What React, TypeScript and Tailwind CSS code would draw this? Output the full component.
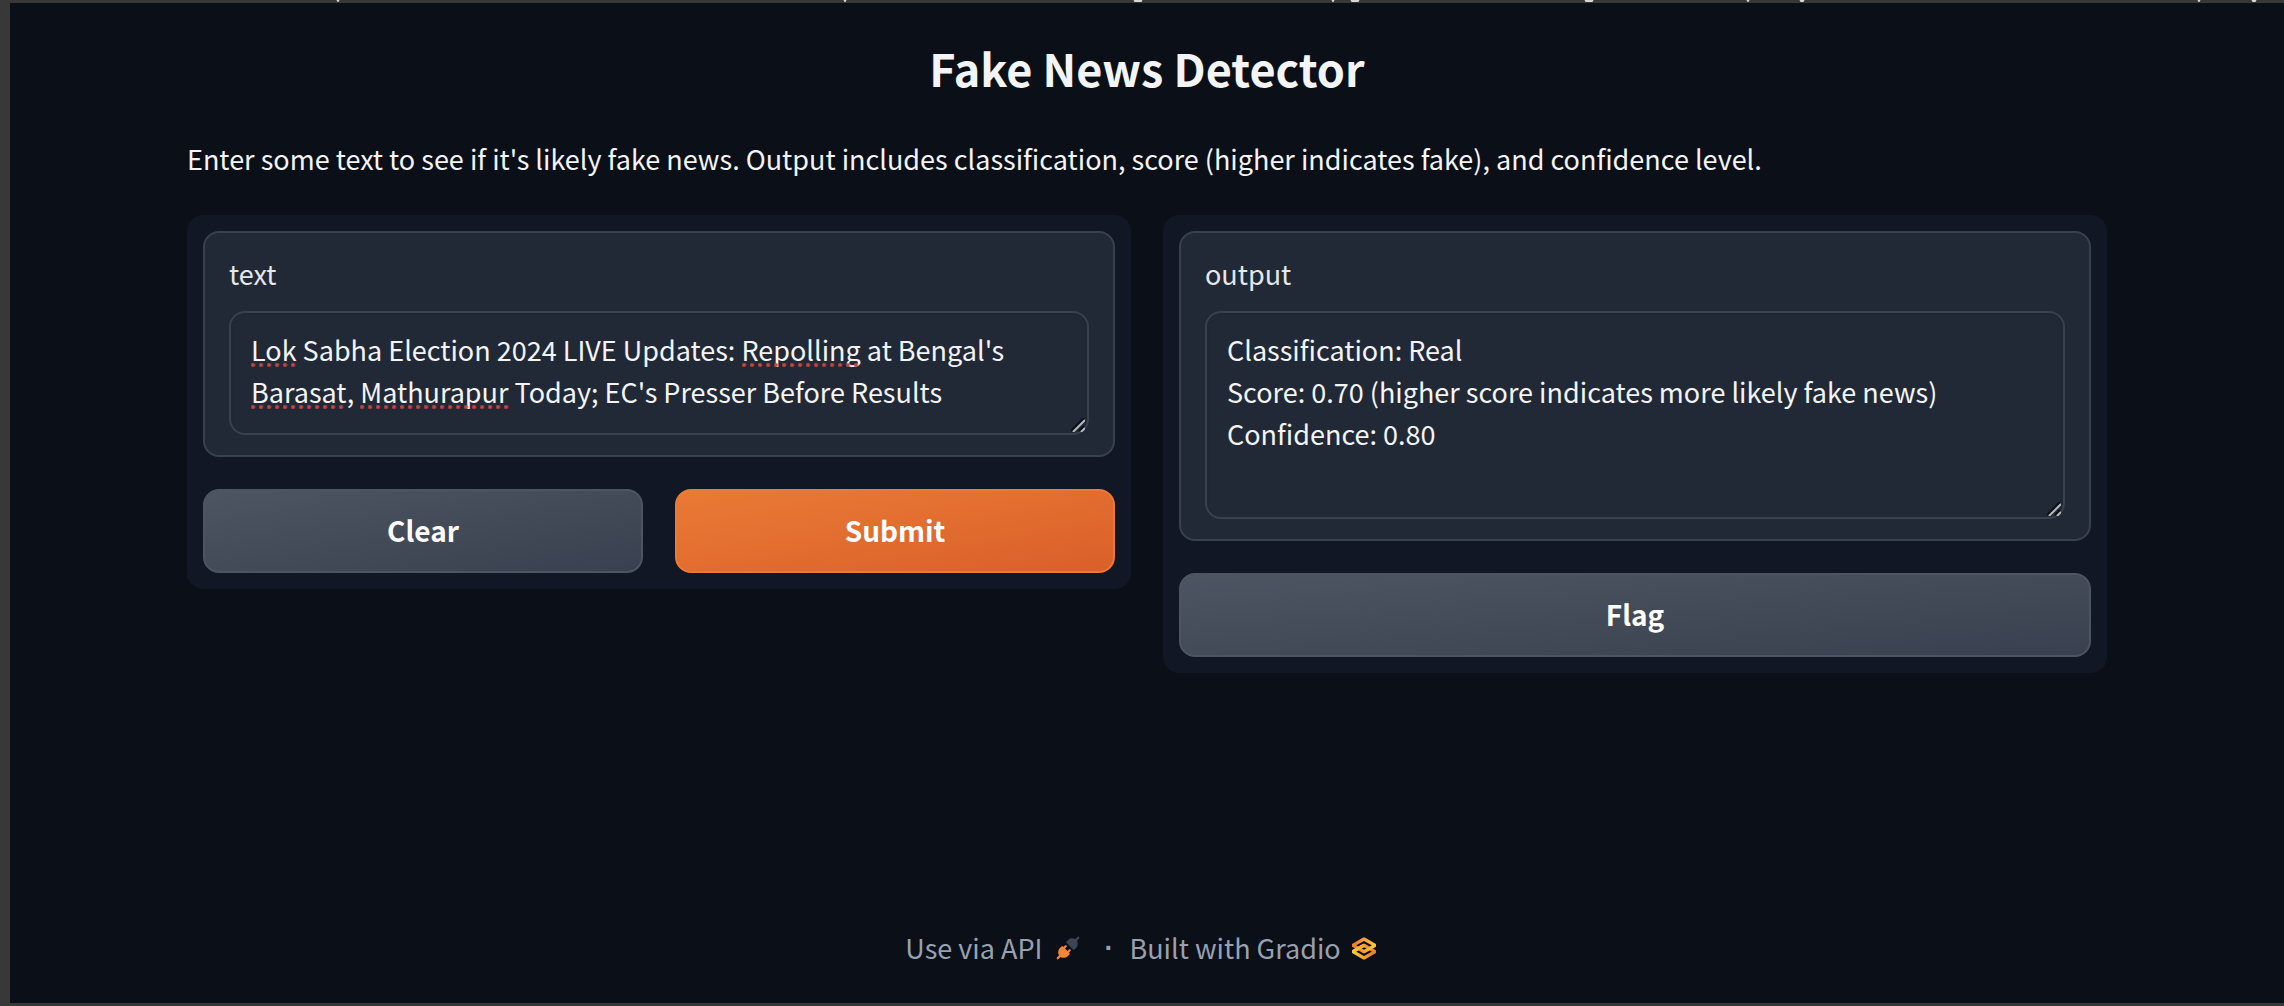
const misspelled = ["Lok", "Repolling", "Barasat", "Mathurapur"];

const articleText =
  "Lok Sabha Election 2024 LIVE Updates: Repolling at Bengal's Barasat, Mathurapur Today; EC's Presser Before Results";

const resultText =
  "Classification: Real\nScore: 0.70 (higher score indicates more likely fake news)\nConfidence: 0.80";

const fieldClass =
  "block w-full resize-none overflow-hidden rounded-2xl border-2 border-[#394150] bg-[#222936] px-5 pt-4 pb-5 text-[27px] leading-[42px] text-gray-100 shadow-[inset_0_2px_4px_rgba(0,0,0,0.06)] outline-none";

const secondaryButton =
  "h-[84px] flex-1 rounded-2xl border-2 border-[#4d5561] bg-linear-to-br from-[#4d5561] to-[#394150] pb-0.5 text-[28px] leading-10 font-bold text-white";

/* Tails of the letters from the line that is scrolled out above the frame. */
const tails = [
  { x: 338, w: 3 },
  { x: 845, w: 3 },
  { x: 1138, w: 9 },
  { x: 1333, w: 3 },
  { x: 1355, w: 9 },
  { x: 1589, w: 9 },
  { x: 1748, w: 3 },
  { x: 1802, w: 5 },
  { x: 2199, w: 3 },
  { x: 2254, w: 5 },
];

function ScrolledLine() {
  return (
    <div className="h-[3px] overflow-hidden">
      <svg className="h-[3px] w-[2284px]" viewBox="0 0 2284 3" aria-hidden="true">
        {tails.map(({ x, w }) => (
          <path key={x} d={`M${x - w / 2} 0h${w}l-1 2h${2 - w}z`} fill="#d6d6d6" />
        ))}
      </svg>
    </div>
  );
}

function ResizeGrip() {
  return (
    <svg
      className="pointer-events-none absolute right-1 bottom-[3px] h-[14px] w-[14px]"
      viewBox="0 0 14 14"
      fill="none"
      aria-hidden="true"
    >
      <path d="M0 13L13 0M8 13L13 8" stroke="#0b0f19" strokeWidth="2" />
      <path d="M2 14L14 2M10 14L14 10" stroke="#b4b7bb" strokeWidth="2" />
    </svg>
  );
}

/* Mirrors the field's text so that the dots fall under the flagged words. */
function SpellingMarks({ text }: { text: string }) {
  return (
    <div
      aria-hidden="true"
      className="pointer-events-none absolute inset-0 border-2 border-transparent px-5 pt-4 pb-5 text-[27px] leading-[42px] text-transparent select-none"
    >
      {text.split(/(\w+)/).map((part, i) =>
        misspelled.includes(part) ? (
          <span
            key={i}
            className="bg-[radial-gradient(circle_at_2px_2px,#c5473f_1px,transparent_3px)] bg-[length:8px_4px] bg-[position:left_bottom_2px] bg-repeat-x"
          >
            {part}
          </span>
        ) : (
          part
        ),
      )}
    </div>
  );
}

function Field({
  id,
  label,
  rows,
  value,
  readOnly,
}: {
  id: string;
  label: string;
  rows: number;
  value: string;
  readOnly?: boolean;
}) {
  return (
    <div className="rounded-2xl border-2 border-[#394150] bg-[#222936] px-6 py-5">
      <label htmlFor={id} className="mb-4 block text-[27px] leading-[42px] text-gray-200">
        {label}
      </label>
      <div className="relative">
        <textarea
          id={id}
          rows={rows}
          defaultValue={value}
          readOnly={readOnly}
          spellCheck={false}
          className={fieldClass}
        />
        {!readOnly && <SpellingMarks text={value} />}
        <ResizeGrip />
      </div>
    </div>
  );
}

function PlugIcon() {
  return (
    <svg className="h-6 w-6" viewBox="0 0 28 28" fill="none" aria-hidden="true">
      <path
        d="M26.94 2.94C27.46 2.42 27.46 1.58 26.94 1.06C26.42 0.54 25.58 0.54 25.06 1.06L22.57 3.54C21.12 2.59 19.54 2.43 18.18 2.64C16.55 2.89 15.11 3.67 14.39 4.39L12.39 6.39C12.14 6.64 12 6.98 12 7.33C12 7.69 12.14 8.03 12.39 8.28L19.72 15.61C20.24 16.13 21.09 16.13 21.61 15.61L23.61 13.61C24.33 12.89 25.11 11.45 25.36 9.82C25.57 8.46 25.41 6.88 24.46 5.43L26.94 2.94Z"
        fill="#3c4555"
      />
      <path
        d="M12.28 12.94C12.8 12.42 12.8 11.58 12.28 11.06C11.76 10.54 10.91 10.54 10.39 11.06L8.67 12.78L8.28 12.39C7.76 11.87 6.91 11.87 6.39 12.39L4.39 14.39C3.67 15.11 2.89 16.55 2.64 18.18C2.43 19.54 2.59 21.12 3.54 22.57L1.06 25.06C0.54 25.58 0.54 26.42 1.06 26.94C1.58 27.46 2.42 27.46 2.94 26.94L5.43 24.46C6.88 25.41 8.46 25.57 9.82 25.36C11.45 25.11 12.89 24.33 13.61 23.61L15.61 21.61C16.13 21.09 16.13 20.24 15.61 19.72L15.22 19.33L16.94 17.61C17.46 17.09 17.46 16.24 16.94 15.72C16.42 15.2 15.58 15.2 15.06 15.72L13.33 17.45L10.55 14.67L12.28 12.94Z"
        fill="#f58533"
      />
    </svg>
  );
}

function GradioLogo() {
  return (
    <svg className="h-[23px] w-[26px]" viewBox="54 80 467 416" fill="none" aria-hidden="true">
      <defs>
        <linearGradient id="lower" x1="60" y1="341" x2="429" y2="344" gradientUnits="userSpaceOnUse">
          <stop stopColor="#f6d23f" />
          <stop offset="1" stopColor="#f08230" />
        </linearGradient>
        <linearGradient id="upper" x1="513" y1="231" x2="143" y2="231" gradientUnits="userSpaceOnUse">
          <stop stopColor="#f6d23f" />
          <stop offset="1" stopColor="#f08230" />
        </linearGradient>
      </defs>
      <path d="M287.5 229L86 344.5L287.5 460L489 344.5L287.5 229Z" stroke="url(#lower)" strokeWidth="59" strokeLinejoin="bevel" />
      <path d="M287.5 116L86 231.5L287.5 347L489 231.5L287.5 116Z" stroke="url(#upper)" strokeWidth="59" strokeLinejoin="bevel" />
      <path d="M86 344L288 229" stroke="url(#lower)" strokeWidth="59" strokeLinejoin="bevel" />
    </svg>
  );
}

export default function App() {
  return (
    <div className="flex min-h-screen flex-col bg-[#383838] pb-[3px] font-['Noto_Sans_CJK_SC','Source_Sans_Pro',sans-serif]">
      <ScrolledLine />
      <div className="ml-[10px] flex flex-1 flex-col bg-[#0b0f17]">
        <main className="mx-auto flex w-full max-w-[1920px] flex-1 flex-col pt-8">
          <h1 className="text-center text-[45px] leading-[66px] font-bold text-gray-100">
            Fake News Detector
          </h1>
          <p className="mt-9 text-[27px] leading-[44px] text-gray-100">
            Enter some text to see if it's likely fake news. Output includes classification, score
            (higher indicates fake), and confidence level.
          </p>
          <div className="mt-[34px] grid grid-cols-2 items-start gap-8">
            <section className="flex flex-col gap-8 rounded-2xl bg-[#111725] p-4">
              <Field id="text" label="text" rows={2} value={articleText} />
              <div className="flex gap-8">
                <button type="button" className={secondaryButton}>
                  Clear
                </button>
                <button
                  type="button"
                  className="h-[84px] flex-1 rounded-2xl border-2 border-[#ea7a35] bg-linear-to-br from-[#ea7a35] to-[#da5f2a] pb-0.5 text-[28px] leading-10 font-bold text-white"
                >
                  Submit
                </button>
              </div>
            </section>
            <section className="flex flex-col gap-8 rounded-2xl bg-[#111725] p-4">
              <Field id="output" label="output" rows={4} value={resultText} readOnly />
              <div className="flex">
                <button type="button" className={secondaryButton}>
                  Flag
                </button>
              </div>
            </section>
          </div>
        </main>
        <footer className="flex items-center justify-center pr-3 pb-[34px] text-[27px] leading-[42px] text-gray-400">
          <a href="#api" className="flex items-center gap-[14px]">
            Use via API <PlugIcon />
          </a>
          <span className="mr-4 ml-6 font-['Liberation_Sans',sans-serif] font-bold">·</span>
          <a href="#gradio" className="flex items-center gap-[10px]">
            Built with Gradio <GradioLogo />
          </a>
        </footer>
      </div>
    </div>
  );
}
